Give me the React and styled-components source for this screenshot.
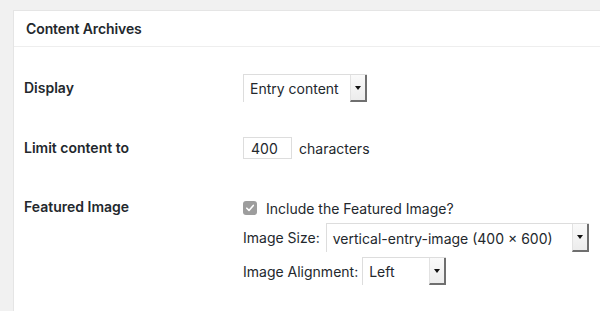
import React from 'react';
import styled, { createGlobalStyle } from 'styled-components';

const GlobalStyle = createGlobalStyle`
  html, body {
    margin: 0;
    padding: 0;
    background: #f1f1f1;
    overflow: hidden;
  }
  body {
    font-family: Inter, "Open Sans", "Liberation Sans", sans-serif;
    color: #23282d;
    font-size: 14px;
  }
`;

const Page = styled.div`
  width: 600px;
  height: 311px;
  padding: 10px 0 0 13px;
  box-sizing: border-box;
  overflow: hidden;
`;

const Panel = styled.section`
  background: #fff;
  border: 1px solid #e5e5e5;
  border-right: none;
  border-bottom: none;
  margin-right: -20px;
  height: 320px;
`;

const PanelHeader = styled.h2`
  margin: 0;
  height: 35px;
  display: flex;
  align-items: center;
  padding-left: 12px;
  font-size: 14px;
  font-weight: 600;
  letter-spacing: -0.1px;
  border-bottom: 1px solid #eee;
`;

const PanelBody = styled.div`
  padding: 12px 10px 0 10px;
`;

const Row = styled.div`
  display: grid;
  grid-template-columns: 219px 1fr;
  align-items: ${p => (p.$top ? 'start' : 'center')};
  padding: ${p => p.$pad};
`;

const Label = styled.div`
  font-weight: 600;
  line-height: 18px;
  padding-top: ${p => p.$offset || 0}px;
`;

const Field = styled.div`
  display: flex;
  align-items: center;
  gap: ${p => p.$gap || 7}px;
  margin-top: ${p => p.$mt || 0}px;
`;

const Stack = styled.div`
  display: flex;
  flex-direction: column;
`;

const SelectBox = styled.div`
  width: ${p => p.$width}px;
  height: ${p => p.$height || 28}px;
  box-sizing: border-box;
  border: 1px solid #ddd;
  border-right: none;
  border-bottom: none;
  display: flex;
  background: #fff;
`;

const SelectValue = styled.div`
  flex: 1;
  display: flex;
  align-items: center;
  padding-left: 6px;
  white-space: nowrap;
`;

const ArrowButton = styled.div`
  width: 14px;
  display: flex;
  align-items: center;
  justify-content: center;
  background: linear-gradient(#fafafa, #ececec);
  border-left: 1px solid #e2e2e2;
  border-right: 2px solid #6f6f6f;
  border-bottom: 2px solid #6f6f6f;

  &::after {
    content: '';
    border-left: 3px solid transparent;
    border-right: 3px solid transparent;
    border-top: 4px solid #111;
  }
`;

const TextInput = styled.div`
  width: 49px;
  height: 22px;
  box-sizing: border-box;
  border: 1px solid #ddd;
  display: flex;
  align-items: center;
  padding-left: 7px;
`;

const Checkbox = styled.span`
  width: 14px;
  height: 14px;
  border-radius: 3px;
  background: #9d9d9d;
  display: inline-flex;
  align-items: center;
  justify-content: center;
`;

const CheckLine = styled.label`
  display: flex;
  align-items: center;
  gap: 9px;
  height: 22px;
`;

const Select = ({ width, height, value }) => (
  <SelectBox $width={width} $height={height}>
    <SelectValue>{value}</SelectValue>
    <ArrowButton />
  </SelectBox>
);

const App = () => (
  <>
    <GlobalStyle />
    <Page>
      <Panel>
        <PanelHeader>Content Archives</PanelHeader>
        <PanelBody>
          <Row $pad="15px 0">
            <Label>Display</Label>
            <Field>
              <Select width={124} value="Entry content" />
            </Field>
          </Row>
          <Row $pad="20px 0 19px">
            <Label>Limit content to</Label>
            <Field>
              <TextInput>400</TextInput>
              <span>characters</span>
            </Field>
          </Row>
          <Row $pad="19px 0" $top>
            <Label $offset={1}>Featured Image</Label>
            <Stack>
              <CheckLine>
                <Checkbox>
                  <svg width="10" height="10" viewBox="0 0 10 10">
                    <path d="M1.8 5.2 L4 7.4 L8.3 2.4" fill="none" stroke="#fff" strokeWidth="1.6" strokeLinecap="round" strokeLinejoin="round" />
                  </svg>
                </Checkbox>
                <span>Include the Featured Image?</span>
              </CheckLine>
              <Field $gap={6} $mt={4}>
                <span>Image Size:</span>
                <Select width={263} height={29} value="vertical-entry-image (400 × 600)" />
              </Field>
              <Field $gap={4} $mt={5}>
                <span>Image Alignment:</span>
                <Select width={84} value="Left" />
              </Field>
            </Stack>
          </Row>
        </PanelBody>
      </Panel>
    </Page>
  </>
);

export default App;
